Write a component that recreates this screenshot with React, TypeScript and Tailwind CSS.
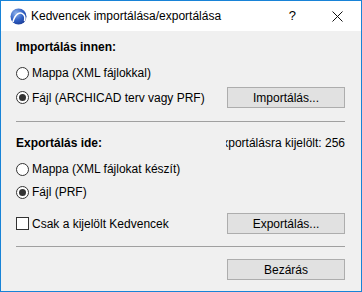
import { useState } from "react";

function Radio({ checked, label, onClick }: { checked: boolean; label: string; onClick: () => void }) {
  return (
    <button type="button" onClick={onClick} className="flex items-center gap-[3px] text-left">
      <span className="w-[13px] h-[13px] rounded-full border border-[#333] bg-white flex items-center justify-center">
        {checked && <span className="w-[7px] h-[7px] rounded-full bg-[#333]" />}
      </span>
      <span>{label}</span>
    </button>
  );
}

function DlgButton({ children }: { children: React.ReactNode }) {
  return (
    <button
      type="button"
      className="w-[118px] h-[21px] bg-[#e1e1e1] border border-[#adadad] text-[12px] leading-none flex items-center justify-center hover:bg-[#e5f1fb] hover:border-[#0078d7]"
    >
      {children}
    </button>
  );
}

export default function App() {
  const [importSrc, setImportSrc] = useState<"folder" | "file">("file");
  const [exportDst, setExportDst] = useState<"folder" | "file">("file");
  const [onlySelected, setOnlySelected] = useState(false);

  return (
    <div
      className="w-[362px] h-[292px] border border-[#1883d7] bg-[#f0f0f0] flex flex-col text-[12px] text-black"
      style={{ fontFamily: '"Liberation Sans", Arial, sans-serif' }}
    >
      {/* title bar */}
      <div className="h-[30px] bg-white flex items-center shrink-0">
        <svg width="17" height="17" viewBox="0 0 17 17" className="ml-[9px]">
          <defs>
            <radialGradient id="g" cx="35%" cy="30%" r="75%">
              <stop offset="0%" stopColor="#8fb2ea" />
              <stop offset="60%" stopColor="#2f5fc4" />
              <stop offset="100%" stopColor="#1c3f98" />
            </radialGradient>
          </defs>
          <circle cx="8.5" cy="8.5" r="8" fill="url(#g)" />
          <path d="M3 14 C5 6 10 3 13.5 6.5 C15 8 15 11 14.5 13" stroke="white" strokeWidth="1.6" fill="none" />
        </svg>
        <span className="ml-[4px]">Kedvencek importálása/exportálása</span>
        <span className="ml-auto mr-[36px] text-[13px]">?</span>
        <svg width="11" height="11" viewBox="0 0 11 11" className="mr-[18px]">
          <path d="M0.5 0.5 L10.5 10.5 M10.5 0.5 L0.5 10.5" stroke="#111" strokeWidth="1" />
        </svg>
      </div>

      {/* body */}
      <div className="flex flex-col pl-[15px] pr-[16px] pt-[6px]">
        <div className="h-[20px] flex items-center font-bold">Importálás innen:</div>
        <div className="h-[20px] mt-[6px] flex items-center">
          <Radio checked={importSrc === "folder"} label="Mappa (XML fájlokkal)" onClick={() => setImportSrc("folder")} />
        </div>
        <div className="h-[21px] mt-[4px] flex items-center justify-between">
          <Radio checked={importSrc === "file"} label="Fájl (ARCHICAD terv vagy PRF)" onClick={() => setImportSrc("file")} />
          <DlgButton>Importálás...</DlgButton>
        </div>

        <div className="h-px bg-[#a0a0a0] mt-[13px]" />

        <div className="h-[20px] mt-[11px] flex items-center justify-between">
          <span className="font-bold">Exportálás ide:</span>
          <div className="w-[119px] overflow-hidden flex justify-end whitespace-nowrap">
            <span className="shrink-0">Exportálásra kijelölt: 256</span>
          </div>
        </div>
        <div className="h-[20px] mt-[6px] flex items-center">
          <Radio checked={exportDst === "folder"} label="Mappa (XML fájlokat készít)" onClick={() => setExportDst("folder")} />
        </div>
        <div className="h-[20px] mt-[3px] flex items-center">
          <Radio checked={exportDst === "file"} label="Fájl (PRF)" onClick={() => setExportDst("file")} />
        </div>
        <div className="h-[21px] mt-[11px] flex items-center justify-between">
          <button type="button" onClick={() => setOnlySelected(!onlySelected)} className="flex items-center gap-[3px]">
            <span className="w-[13px] h-[13px] border border-[#333] bg-white flex items-center justify-center">
              {onlySelected && (
                <svg width="9" height="9" viewBox="0 0 9 9">
                  <path d="M1 4.5 L3.5 7 L8 1.5" stroke="#333" strokeWidth="1.4" fill="none" />
                </svg>
              )}
            </span>
            <span>Csak a kijelölt Kedvencek</span>
          </button>
          <DlgButton>Exportálás...</DlgButton>
        </div>

        <div className="h-px bg-[#a0a0a0] mt-[12px]" />

        <div className="h-[21px] mt-[12px] flex justify-end">
          <DlgButton>Bezárás</DlgButton>
        </div>
      </div>
    </div>
  );
}
